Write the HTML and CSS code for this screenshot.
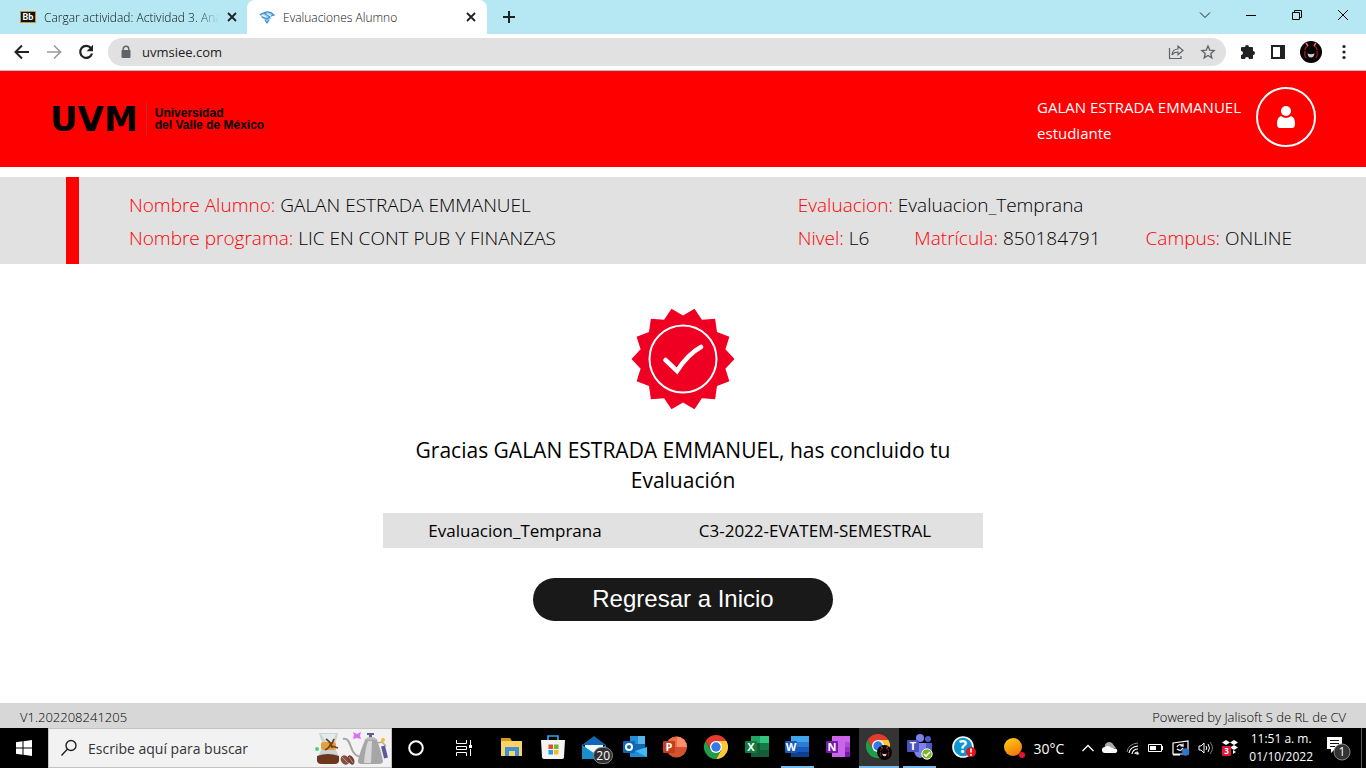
FILE: index.html
```html
<!DOCTYPE html>
<html lang="es">
<head>
<meta charset="utf-8">
<title>Evaluaciones Alumno</title>
<link rel="stylesheet" href="styles.css">
</head>
<body>
<svg class="sprite" aria-hidden="true">
  <symbol id="close" viewBox="0 0 10 10"><path d="M1 1l8 8M9 1l-8 8" stroke="#202124" stroke-width="1.800" fill="none"/></symbol>
  <symbol id="chrome" viewBox="0 0 24 24">
    <path d="M12 6h10.400A12 12 0 0 1 12 24l5.200-9z" fill="#fcc934"/>
    <path d="M12 6h10.400A12 12 0 0 0 1.600 6l5.200 9z" fill="#e33b2e"/>
    <path d="M6.800 15L1.600 6A12 12 0 0 0 12 24l5.200-9z" fill="#1e9e4a"/>
    <circle cx="12" cy="12" r="6" fill="#fff"/><circle cx="12" cy="12" r="4.700" fill="#3579e8"/>
  </symbol>
  <symbol id="avatar" viewBox="0 0 22 22">
    <circle cx="11" cy="11" r="11" fill="#080303"/>
    <path d="M5 9Q5 6 8 5M17 9Q17 6 14 5M5 10Q4 14 6 17M17 10Q18 14 16 17" stroke="#a31616" stroke-width="1.300" fill="none"/>
    <path d="M6 2l2 3M16 2l-2 3" stroke="#e86b6b" stroke-width="1.400"/>
    <path d="M7.500 12.500q3.500 1.500 7 0q-.5 4-3.500 4t-3.500-4z" fill="#ccc"/>
  </symbol>
</svg>

<header class="browser">
  <div class="tabs">
    <div class="tab tab-first">
      <span class="bb">Bb</span><a class="tab-title faded" href="#">Cargar actividad: Actividad 3. Aná</a>
      <button class="plain tab-close" aria-label="Cerrar pestaña"><svg width="10" height="10"><use href="#close"/></svg></button>
    </div>
    <div class="tab tab-active">
      <svg width="16" height="16" viewBox="0 0 16 16"><path d="M1 6q3-3 6-2 4-3 8 2l-3 2q1 2-2 3l-2 3-3-4-2-1z" fill="#9fd3f1"/><path d="M1 6q3-3 6-1l4 3M5 4q5-3 10 2l-3 1M3 8l5 2 3-2M6 11l2 3 2-3" stroke="#3f8cce" stroke-width="1.200" fill="none"/><path d="M3 6l4 2M8 5l4 2" stroke="#fff"/></svg>
      <a class="tab-title" href="#">Evaluaciones Alumno</a>
      <button class="plain tab-close" aria-label="Cerrar pestaña"><svg width="10" height="10"><use href="#close"/></svg></button>
    </div>
    <button class="plain new-tab" aria-label="Nueva pestaña"><svg width="12" height="12" viewBox="0 0 12 12"><path d="M6 0v12M0 6h12" stroke="#202124" stroke-width="2"/></svg></button>
    <div class="window-buttons">
      <button class="plain" aria-label="Buscar pestañas"><svg width="12" height="12" viewBox="0 0 12 12"><path d="M1 3.500l5 5 5-5" stroke="#222" fill="none"/></svg></button>
      <button class="plain" aria-label="Minimizar"><svg width="12" height="12" viewBox="0 0 12 12"><path d="M1 6.500h10" stroke="#000"/></svg></button>
      <button class="plain" aria-label="Restaurar"><svg width="12" height="12" viewBox="0 0 12 12"><path d="M1.500 3.500h7v7h-7zM3.500 3.500v-2h7v7h-2" stroke="#000" fill="none"/></svg></button>
      <button class="plain" aria-label="Cerrar"><svg width="12" height="12" viewBox="0 0 12 12"><path d="M1 1l10 10M11 1L1 11" stroke="#000" fill="none"/></svg></button>
    </div>
  </div>
  <div class="toolbar">
    <button class="plain nav" aria-label="Atrás"><svg width="16" height="16" viewBox="0 0 16 16"><path d="M15 8H2M8 1.500L1.500 8 8 14.500" stroke="#202124" stroke-width="2" fill="none"/></svg></button>
    <button class="plain nav" aria-label="Adelante"><svg width="16" height="16" viewBox="0 0 16 16"><path d="M1 8h13M8 1.500L14.500 8 8 14.500" stroke="#9b9c9e" stroke-width="1.700" fill="none"/></svg></button>
    <button class="plain nav" aria-label="Recargar"><svg width="16" height="16" viewBox="0 0 16 16"><path d="M13 4.200A6 6 0 1 0 14 9.500" stroke="#202124" stroke-width="2.200" fill="none"/><path d="M15 .8v6.400H8.600z" fill="#202124"/></svg></button>
    <div class="address">
      <svg width="10" height="14" viewBox="0 0 10 14"><path d="M2.200 6V4a2.800 2.800 0 0 1 5.600 0v2" stroke="#5f6368" stroke-width="1.400" fill="none"/><rect x="0.500" y="5" width="9" height="8" rx="1" fill="#5f6368"/></svg>
      <input class="url" aria-label="Dirección" value="uvmsiee.com">
      <button class="plain" aria-label="Compartir"><svg width="16" height="16" viewBox="0 0 16 16"><path d="M1.500 4v10.500H13V12" stroke="#5f6368" fill="none" stroke-width="1.200"/><path d="M4 11q.5-6 6-6V2l5 4.500-5 4.300V8Q6 8 4 11z" stroke="#5f6368" fill="none" stroke-width="1.200"/></svg></button>
      <button class="plain" aria-label="Favorito"><svg width="16" height="16" viewBox="0 0 16 16"><path d="M8 2l1.700 4.100 4.500.4-3.400 2.900 1 4.400L8 11.500l-3.800 2.300 1-4.400L1.800 6.500l4.500-.4z" stroke="#5f6368" fill="none" stroke-width="1.300"/></svg></button>
    </div>
    <div class="tools">
      <button class="plain" aria-label="Extensiones"><svg width="16" height="16" viewBox="0 0 16 16"><path d="M1 4q0-1 1-1h3a2 2 0 0 1 4 0h3q1 0 1 1v3a2 2 0 0 1 0 4v3q0 1-1 1H9a2 2 0 0 0-4 0H2q-1 0-1-1v-3a2 2 0 0 0 0-4z" fill="#202124"/></svg></button>
      <button class="plain" aria-label="Panel lateral"><svg width="16" height="16" viewBox="0 0 16 16"><rect x="2" y="2" width="12" height="12" stroke="#202124" stroke-width="2" fill="none"/><path d="M10 2h5v12h-5z" fill="#202124"/></svg></button>
      <button class="plain" aria-label="Perfil"><svg width="22" height="22"><use href="#avatar"/></svg></button>
      <button class="plain" aria-label="Menú"><svg width="16" height="16" viewBox="0 0 16 16" fill="#202124"><circle cx="8" cy="2.500" r="1.600"/><circle cx="8" cy="8" r="1.600"/><circle cx="8" cy="13.500" r="1.600"/></svg></button>
    </div>
  </div>
</header>

<div class="site-header">
  <a class="logo" href="#"><span class="logo-mark">UVM</span><span class="logo-name">Universidad<br>del Valle de México</span></a>
  <div class="user">
    <div class="user-text">GALAN ESTRADA EMMANUEL<br>estudiante</div>
    <span class="user-icon"><svg width="18" height="22" viewBox="0 0 18 22" fill="#fff"><circle cx="9" cy="5" r="5"/><path d="M4 10Q9 14 14 10Q18 11 18 18Q18 22 15 22H3Q0 22 0 18Q0 11 4 10z"/></svg></span>
  </div>
</div>

<section class="info">
  <div class="info-left">
    <div><span class="label">Nombre Alumno:</span> GALAN ESTRADA EMMANUEL</div>
    <div><span class="label">Nombre programa:</span> LIC EN CONT PUB Y FINANZAS</div>
  </div>
  <div class="info-right">
    <div><span class="label">Evaluacion:</span> Evaluacion_Temprana</div>
    <div class="info-row">
      <div><span class="label">Nivel:</span> L6</div>
      <div><span class="label">Matrícula:</span> 850184791</div>
      <div><span class="label">Campus:</span> ONLINE</div>
    </div>
  </div>
</section>

<main class="content">
  <svg class="seal" width="104" height="102" viewBox="-52 -51 104 102">
    <polygon fill="#ef0022" points="51.5,0 42.4,9.700 46.400,22.300 34,27.100 32.100,40.300 18.900,39.200 11.500,50.200 0,43.500 -11.500,50.200 -18.900,39.200 -32.100,40.300 -34,27.100 -46.400,22.300 -42.400,9.700 -51.500,0 -42.400,-9.700 -46.400,-22.300 -34,-27.100 -32.100,-40.300 -18.900,-39.200 -11.500,-50.200 0,-43.500 11.500,-50.200 18.900,-39.200 32.100,-40.300 34,-27.100 46.400,-22.300 42.400,-9.700"/>
    <circle r="33.500" fill="none" stroke="#fff" stroke-width="2"/>
    <path d="M-17.500 1L-6 12Q5-5 18-12" fill="none" stroke="#fff" stroke-width="4.600" stroke-linecap="round"/>
  </svg>
  <p class="thanks">Gracias GALAN ESTRADA EMMANUEL, has concluido tu Evaluación</p>
  <table class="result"><tr><td class="result-name">Evaluacion_Temprana</td><td>C3-2022-EVATEM-SEMESTRAL</td></tr></table>
  <button class="home">Regresar a Inicio</button>
</main>

<footer class="site-footer"><span>V1.202208241205</span><span>Powered by Jalisoft S de RL de CV</span></footer>

<nav class="taskbar">
  <button class="plain start" aria-label="Inicio"><svg width="16" height="16" viewBox="0 0 16 16" fill="#fff"><path d="M0 2.200l6.500-.9v6.200H0zM7.500 1.200L16 0v7.500H7.500zM0 8.500h6.500v6.200L0 13.800zM7.500 8.500H16V16l-8.500-1.200z"/></svg></button>
  <div class="search">
    <svg width="18" height="18" viewBox="0 0 18 18"><circle cx="11" cy="6.500" r="5" stroke="#222" stroke-width="1.400" fill="none"/><path d="M7.500 10L1.500 16.500" stroke="#222" stroke-width="1.400"/></svg>
    <input class="search-input" aria-label="Buscar" placeholder="Escribe aquí para buscar">
    <svg width="74" height="34" viewBox="0 0 74 34">
      <path d="M4 2h19q-1 8-5 13 5 6 6 12 1 5-2 6H5q-3-1-2-6 1-6 6-12Q5 8 4 2z" fill="#cad4d4"/>
      <path d="M2 25q11-4 22 0v5q-1 3-4 3H6q-3 0-4-3z" fill="#6b361c"/><path d="M6 3h15l-4 8h-6z" fill="#e2edf1"/>
      <rect x="6" y="11" width="15" height="8" rx="2" fill="#e2a13d"/><path d="M11 8q6 4 6 9M19 8q-3 8-9 11M14 14l9 3" stroke="#71401f" stroke-width="1.800" fill="none"/>
      <circle cx="2" cy="18" r="2" fill="#48d27b"/>
      <ellipse cx="30" cy="29" rx="4" ry="5" transform="rotate(-35 30 29)" fill="#885044"/><ellipse cx="36" cy="29" rx="3" ry="5" transform="rotate(-25 36 29)" fill="#754035"/><path d="M27 26l6 6M34 26l4 6" stroke="#c98c7a"/>
      <path d="M28 8q5-2 8 8t11 10" stroke="#a5a5a5" stroke-width="2" fill="none"/>
      <path d="M50 9h12q4 10 6 21 0 3-4 3H47q-5 0-4-4 3-11 7-20z" fill="#a6a6a6"/><path d="M53 10h4l-1 22h-7q1-14 4-22z" fill="#d8d8d8"/>
      <path d="M49 9q7-7 14 0z" fill="#bbb"/><path d="M52 2h7v2h-2v2h-3V4h-2z" fill="#655c8b"/>
      <path d="M62 12l5-1 4 4" stroke="#aaa" stroke-width="1.500" fill="none"/><path d="M68 15l3 12" stroke="#605698" stroke-width="4"/>
      <path d="M38 1l4 2 4-2-1 4 1 3-4-1-4 1 1-4z" fill="#df70f3"/><circle cx="68" cy="9" r="2" fill="#ffba18"/>
    </svg>
  </div>
  <button class="plain task" aria-label="Cortana"><svg width="18" height="18" viewBox="0 0 18 18"><circle cx="9" cy="9" r="6.800" stroke="#fff" stroke-width="2" fill="none"/></svg></button>
  <button class="plain task" aria-label="Vista de tareas"><svg width="18" height="18" viewBox="0 0 18 18"><path d="M1.500 1v3.500h10V1M1.500 17v-3.500h10V17M1.500 7.500h10v3h-10zM15.500 1v5M15.500 10v7" stroke="#fff" fill="none"/><path d="M14 6h3v3h-3z" fill="#fff"/></svg></button>
  <div class="apps">
    <button class="plain app" aria-label="Explorador"><svg width="24" height="24" viewBox="0 0 24 24"><path d="M1 3h9l2 3H1z" fill="#d79a10"/><path d="M1 6h21v15H1z" fill="#fbd365"/><path d="M5 12h14v9h-4v-5H9v5H5z" fill="#3d91d6"/></svg></button>
    <button class="plain app" aria-label="Tienda"><svg width="24" height="24" viewBox="0 0 24 24"><path d="M7 5V1h10v4" stroke="#28a8e0" stroke-width="1.700" fill="none"/><path d="M0 5h24l-1 17q0 2-3 2H4q-3 0-3-2z" fill="#f4f4f5"/><path d="M7.500 9.500H12V14H7.500z" fill="#e64e2a"/><path d="M13 9.500h4.500V14H13z" fill="#75b92b"/><path d="M7.500 15H12v4.500H7.500z" fill="#219fde"/><path d="M13 15h4.500v4.500H13z" fill="#f9b722"/></svg></button>
    <button class="plain app" aria-label="Correo"><svg width="24" height="24" viewBox="0 0 24 24"><path d="M0 10L12 1l12 9z" fill="#1267b4"/><path d="M3 10h18v9H3z" fill="#f2f8fb"/><path d="M0 10l12 8 12-8v14H0z" fill="#1ea7e4"/><path d="M0 10l19 14H0z" fill="#168fcd"/></svg><span class="mail-count">20</span></button>
    <button class="plain app" aria-label="Outlook"><svg width="24" height="24" viewBox="0 0 24 24"><path d="M7 1h15v20H7z" fill="#1268b1"/><path d="M15 1h7v8h-7z" fill="#55b7ed"/><path d="M7 1h8v8H7z" fill="#278bd2"/><path d="M7 13l9 5 8-6v10H7z" fill="#1c8cd5"/><path d="M24 12v10L12 16z" fill="#43b8f1"/><rect y="6" width="12" height="12" rx="1" fill="#0869bc"/><circle cx="6" cy="12" r="3" stroke="#fff" stroke-width="2" fill="none"/></svg></button>
    <button class="plain app" aria-label="PowerPoint"><svg width="24" height="24" viewBox="0 0 24 24"><circle cx="13.500" cy="12" r="10.500" fill="#d35230"/><path d="M13.500 1.500A10.500 10.500 0 0 1 24 12H13.500z" fill="#ff8f6b"/><path d="M13.500 1.500V12H3A10.500 10.500 0 0 1 13.500 1.500z" fill="#ed6c47"/><rect y="6" width="12" height="12" rx="1" fill="#c43e1c"/><text class="app-letter" x="6" y="16">P</text></svg></button>
    <button class="plain app" aria-label="Chrome"><svg width="24" height="24"><use href="#chrome"/></svg></button>
    <button class="plain app" aria-label="Excel"><svg width="24" height="24" viewBox="0 0 24 24"><path d="M6 1h18v21H6z" fill="#185c37"/><path d="M6 1h9v7H6z" fill="#21a366"/><path d="M15 1h9v7h-9z" fill="#33c481"/><path d="M15 8h9v7h-9z" fill="#107c41"/><rect y="6" width="12" height="12" rx="1" fill="#107c41"/><text class="app-letter" x="6" y="16">X</text></svg></button>
    <button class="plain app running" aria-label="Word"><svg width="24" height="24" viewBox="0 0 24 24"><path d="M6 1h18v6H6z" fill="#41a5ee"/><path d="M6 7h18v5H6z" fill="#2b7cd3"/><path d="M6 12h18v5H6z" fill="#185abd"/><path d="M6 17h18v5H6z" fill="#103f91"/><rect y="6" width="12" height="12" rx="1" fill="#185abd"/><text class="app-letter" x="6" y="16">W</text></svg></button>
    <button class="plain app" aria-label="OneNote"><svg width="24" height="24" viewBox="0 0 24 24"><path d="M6 1h18v21H6z" fill="#ca64ea"/><path d="M19 7h5v5h-5z" fill="#ae4bd5"/><path d="M19 12h5v5h-5z" fill="#9332bf"/><path d="M19 17h5v5h-5z" fill="#7719aa"/><rect y="6" width="12" height="12" rx="1" fill="#7719aa"/><text class="app-letter" x="6" y="16">N</text></svg></button>
    <button class="plain app current" aria-label="Chrome abierto"><svg width="26" height="26" viewBox="0 0 26 26"><use href="#chrome" width="24" height="24"/><use href="#avatar" x="11" y="11" width="15" height="15"/></svg></button>
    <button class="plain app running" aria-label="Teams"><svg width="26" height="26" viewBox="0 0 26 26"><circle cx="13" cy="4" r="4" fill="#7b83eb"/><circle cx="21" cy="5" r="3" fill="#5059c9"/><path d="M16 9h9v8q-1 5-6 5z" fill="#5059c9"/><path d="M7 9h12v8q0 6-6 7-5-1-6-7z" fill="#7b83eb"/><rect y="6" width="12" height="12" rx="1" fill="#4b53bc"/><text class="app-letter" x="6" y="16">T</text><circle cx="20" cy="20" r="5.200" fill="#7ab51d" stroke="#fff"/><path d="M17 20l2 2 4-4" stroke="#fff" stroke-width="1.600" fill="none"/></svg></button>
  </div>
  <button class="plain help" aria-label="Ayuda"><svg width="24" height="24" viewBox="0 0 24 24"><circle cx="11" cy="11" r="10" fill="#0f94d2" stroke="#fff" stroke-width="1.600"/><text class="question" x="11" y="17">?</text><circle cx="19" cy="16" r="5" fill="#e3151e"/><path d="M19 12.500v4M19 18v1.800" stroke="#fff" stroke-width="1.600"/></svg></button>
  <div class="tray">
    <svg class="sun" width="22" height="22" viewBox="0 0 22 22"><defs><linearGradient id="sun" x2="0.500" y2="1"><stop stop-color="#ffd116"/><stop offset="1" stop-color="#f27b0a"/></linearGradient></defs><circle cx="10" cy="10" r="9" fill="url(#sun)"/><circle cx="19" cy="18" r="3" fill="#e81236"/></svg>
    <span class="temperature">30°C</span>
    <svg width="12" height="12" viewBox="0 0 12 12"><path d="M.5 9L6 3.500 11.500 9" stroke="#fff" stroke-width="1.300" fill="none"/></svg>
    <svg width="16" height="12" viewBox="0 0 16 12"><path d="M3 6a4.500 4.500 0 0 1 8.500-3L14 6z" fill="#aaa"/><path d="M3 11a3 3 0 0 1 0-6q3-2 6 .5l3.500 1a2.300 2.300 0 0 1 1 4.500z" fill="#fff"/></svg>
    <svg width="14" height="14" viewBox="0 0 14 14"><path d="M1 11Q2 3 12 2" stroke="#888" fill="none"/><path d="M3 12Q4 6 12 5M6 13q1-5 6-5M9 13q0-2 3-2" stroke="#fff" stroke-width="1.200" fill="none"/><circle cx="11.500" cy="12.500" r="1.300" fill="#fff"/></svg>
    <svg width="16" height="12" viewBox="0 0 16 12"><path d="M.5 2.500h13v7H.5zM14.500 4v4" stroke="#fff" fill="none"/><path d="M2 4h6v4H2z" fill="#fff"/></svg>
    <svg width="18" height="16" viewBox="0 0 18 16"><path d="M1 3l15-2v13H1zM1 15h7" stroke="#fff" stroke-width="1.200" fill="none"/><path d="M5 7q2-4 6-1V3.500M11 6H8.500M11 8q-2 4-6 1" stroke="#fff" stroke-width="1.200" fill="none"/><circle cx="13.500" cy="12" r="3.800" fill="#2f76c5"/></svg>
    <svg width="16" height="14" viewBox="0 0 16 14"><path d="M1 5h2l3-3v10L3 9H1z" stroke="#fff" fill="none"/><path d="M8 5q1.500 2 0 4M10 3q3 4 0 8" stroke="#fff" fill="none"/><path d="M12 1q5 6 0 12" stroke="#777" fill="none"/></svg>
    <svg width="16" height="16" viewBox="0 0 16 16"><path d="M4 0l4 2.500L4 5 0 2.500zM12 0l4 2.500L12 5 8 2.500zM12 5l4 2.500-4 2.500-4-2.500zM11 10l3 2-3 2z" fill="#fff"/><rect y="6" width="9" height="10" rx="1" fill="#e41535"/><text class="box-count" x="4.500" y="14">3</text></svg>
    <time class="clock">11:51 a. m.<br>01/10/2022</time>
    <button class="plain notify" aria-label="Notificaciones"><svg width="26" height="26" viewBox="0 0 26 26"><path d="M1 2h15v12H9l-4 4v-4H1z" fill="#fff"/><path d="M4 5.500h9M4 8.500h9M4 11.500h5" stroke="#111" stroke-width="1.200"/><circle cx="16" cy="17" r="8" fill="#333" stroke="#888"/><text class="notify-count" x="16" y="21">1</text></svg></button>
  </div>
</nav>
</body>
</html>
```
FILE: styles.css
```css
* { box-sizing: border-box; }
body {
  margin: 0;
  min-height: 100vh;
  display: flex;
  flex-direction: column;
  background: #fff;
  color: #000;
  font-family: "Open Sans", "Noto Sans", sans-serif;
}
svg { display: block; flex: none; overflow: visible; }
a { color: inherit; text-decoration: none; }
.sprite { position: absolute; width: 0; height: 0; }
.plain {
  display: flex;
  align-items: center;
  justify-content: center;
  padding: 0;
  border: 0;
  background: none;
}

/* Browser chrome */
.tabs { display: flex; height: 34px; background: #b5e8f3; color: #111; font-size: 12px; font-weight: 300; }
.tab { display: flex; align-items: center; padding-right: 11px; }
.tab-first { width: 247px; padding-left: 20px; gap: 8px; padding-right: 10px; }
.tab-active { width: 240px; padding-left: 12px; gap: 8px; background: #fff; border-radius: 8px 8px 0 0; }
.tab-title { flex: 1; overflow: hidden; white-space: nowrap; }
.faded { margin-right: -6px; mask-image: linear-gradient(90deg, #000 85%, transparent 97%); }
.bb {
  width: 16px;
  height: 12px;
  background: #111;
  border: 1px solid #c99435;
  color: #fff;
  font: bold 9px/10px "Roboto", sans-serif;
  text-align: center;
}
.new-tab { width: 44px; }
.window-buttons { display: flex; margin-left: auto; height: 29px; }
.window-buttons .plain { width: 46px; }
.toolbar { display: flex; align-items: center; height: 37px; padding-left: 6px; border-bottom: 1px solid #bdbdbd; }
.nav { width: 32px; height: 32px; }
.address {
  flex: 1;
  display: flex;
  align-items: center;
  height: 28px;
  margin-left: 6px;
  padding: 0 10px 0 13px;
  gap: 16px;
  border-radius: 14px;
  background: #e1e1e1;
}
.url {
  flex: 1;
  min-width: 0;
  margin-left: -5px;
  padding: 0;
  border: 0;
  background: none;
  color: #222;
  font: 13px "Open Sans", sans-serif;
}
.tools { display: flex; align-items: center; gap: 14px; padding: 0 14px; }
.tools .plain { min-width: 16px; }

/* Site */
.site-header {
  display: flex;
  align-items: center;
  justify-content: space-between;
  height: 96px;
  padding: 0 50px;
  background: #f00;
}
.logo { display: flex; align-items: center; }
.logo-mark { font: bold 34px/34px "DejaVu Sans", sans-serif; }
.logo-name {
  margin-left: 8px;
  padding: 5px 0 5px 8px;
  border-left: 1px solid #d92020;
  font: bold 12px/12px "Liberation Sans", sans-serif;
}
.user { display: flex; align-items: center; gap: 15px; margin-bottom: 4px; color: #fff; font-size: 15px; line-height: 26px; }
.user-text { padding-top: 6px; }
.user-icon {
  display: flex;
  align-items: center;
  justify-content: center;
  width: 60px;
  height: 60px;
  border: 2px solid #fff;
  border-radius: 50%;
}
.info {
  display: flex;
  margin-top: 10px;
  padding-left: 66px;
  background: #e1e1e1;
  font-size: 19px;
  line-height: 33px;
  font-weight: 300;
}
.label { color: #f00; }
.info-left { flex: 1; padding: 12px 0 9px 50px; border-left: 13px solid #f00; }
.info-right { padding: 12px 74px 9px 0; }
.info-row { display: flex; gap: 45px; }
.content { flex: 1; display: flex; flex-direction: column; align-items: center; padding: 44px 20px 20px; }
.thanks { max-width: 600px; margin: 25px 0 18px; font-size: 21px; line-height: 30px; text-align: center; }
.result {
  width: 100%;
  max-width: 600px;
  border-collapse: collapse;
  background: #e1e1e1;
  font-size: 17px;
  line-height: 35px;
  text-align: center;
}
.result td { padding: 0; }
.result-name { width: 44%; }
.home {
  margin-top: 30px;
  padding: 0 59px 2px;
  border: 0;
  border-radius: 22px;
  background: #191919;
  color: #fff;
  font: 24px/41px "Liberation Sans", sans-serif;
}
.site-footer {
  display: flex;
  justify-content: space-between;
  padding: 4px 20px 0;
  background: #d7d7d7;
  font-size: 13px;
  line-height: 21px;
  font-weight: 300;
}

/* Taskbar */
.taskbar { display: flex; height: 40px; background: #000; color: #fff; }
.start { width: 48px; }
.search {
  display: flex;
  align-items: center;
  width: 344px;
  padding: 0 2px 0 11px;
  gap: 10px;
  border: 1px solid #c2c2c2;
  background: #f2f2f2;
}
.search-input {
  flex: 1;
  min-width: 0;
  padding: 0;
  border: 0;
  background: none;
  font: 14px "Open Sans", sans-serif;
}
.search-input::placeholder { color: #333; opacity: 1; }
.task { width: 48px; }
.apps { display: grid; grid-template-columns: repeat(11, 1fr); width: 448px; margin-left: 4px; }
.app { position: relative; border-bottom: 2px solid transparent; }
.running { margin: 0 4px; border-bottom-color: #76b9ed; }
.current { background: #343434; border-bottom-color: #76b9ed; }
.app-letter { fill: #fff; font: bold 11px "Open Sans", sans-serif; text-anchor: middle; }
.mail-count {
  position: absolute;
  right: 1px;
  bottom: 2px;
  width: 20px;
  border: 1px solid #888;
  border-radius: 9px;
  background: #303030;
  color: #fff;
  font: 12px/15px "Open Sans", sans-serif;
  text-align: center;
}
.help { width: 48px; }
.question { fill: #fff; font: bold 17px "Open Sans", sans-serif; text-anchor: middle; }
.tray { display: flex; align-items: center; gap: 8px; margin: 0 4px 0 auto; padding-right: 9px; border-right: 1px solid #555; }
.temperature { margin-right: 10px; font-size: 14px; }
.clock { margin-left: 3px; font-size: 12px; line-height: 18px; text-align: center; }
.notify { margin-left: 5px; }
.box-count { fill: #fff; font: bold 8px "Open Sans", sans-serif; text-anchor: middle; }
.notify-count { fill: #fff; font: 12px "Open Sans", sans-serif; text-anchor: middle; }
```
